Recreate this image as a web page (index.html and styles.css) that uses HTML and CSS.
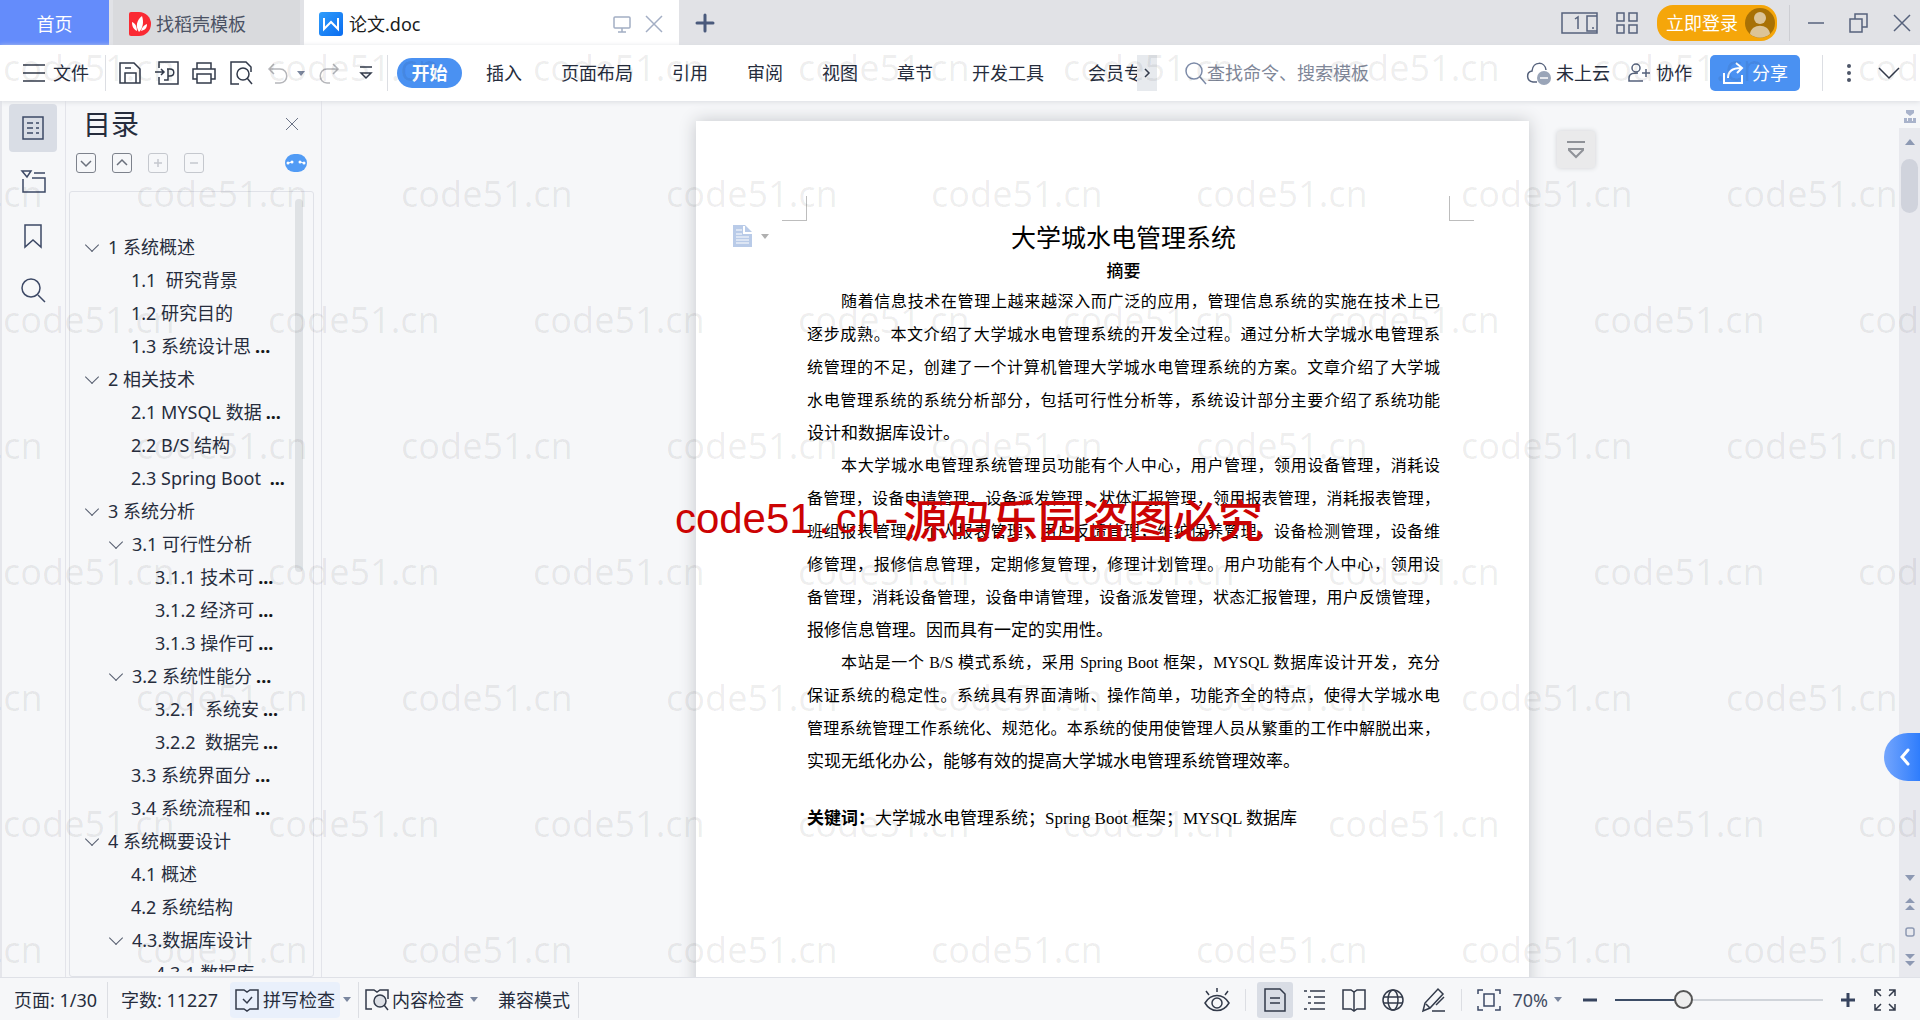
FILE: index.html
```html
<!DOCTYPE html>
<html lang="zh-CN">
<head>
<meta charset="utf-8">
<title>论文.doc</title>
<link rel="stylesheet" href="styles.css">
</head>
<body>
<header class="titlebar">
  <button class="tab tab-home">首页</button>
  <button class="tab tab-idle">
    <svg width="24" height="24" viewBox="0 0 24 24"><path d="M3 0h8a12 12 0 0 1 0 24H3a2 2 0 0 1-2-2V2a2 2 0 0 1 2-2z" fill="#fa2a33"/><path d="M11 20C7 14 9 8 14 4c2 6 1 12-3 16zM9 19c-4-2-5-5-5-9 3 1 5 4 5 9zM13 19c1-4 3-6 6-7 0 4-2 6-6 7z" fill="#fff"/></svg>
    <span>找稻壳模板</span>
  </button>
  <div class="tab tab-active">
    <svg width="24" height="24" viewBox="0 0 24 24"><defs><linearGradient id="wg" x1="0" y1="0" x2="1" y2="1"><stop offset="0" stop-color="#2f9dfb"/><stop offset="1" stop-color="#0a6cf0"/></linearGradient></defs><rect width="24" height="24" rx="3" fill="url(#wg)"/><path d="M5 6v11l7-7 7 7V6" fill="none" stroke="#fff" stroke-width="2"/></svg>
    <span class="tab-name">论文.doc</span>
    <svg class="line muted" width="20" height="20" viewBox="0 0 20 20"><rect x="2" y="3" width="16" height="11" rx="1"/><path d="M10 14v4M6 18h8"/></svg>
    <button class="plain" aria-label="关闭标签"><svg class="line muted" width="20" height="20" viewBox="0 0 20 20"><path d="M2 2l16 16M18 2L2 18"/></svg></button>
  </div>
  <button class="plain new-tab" aria-label="新建"><svg width="20" height="20" viewBox="0 0 20 20" fill="none" stroke="#4a5a7c" stroke-width="3" stroke-linecap="round"><path d="M10 2v16M2 10h16"/></svg></button>
  <div class="window-tools">
    <button class="plain" aria-label="窗口布局"><svg class="line slate" width="38" height="24" viewBox="0 0 38 24"><rect x="1" y="2" width="35" height="20"/><path d="M14 8l3-2v12M36 5H26v15h10M31 17h2"/></svg></button>
    <button class="plain" aria-label="应用"><svg class="line slate" width="24" height="24" viewBox="0 0 24 24"><path d="M2 2h7v8H2zM14 2h8v8h-8zM2 14h7v8H2zM14 14h8v8h-8z"/></svg></button>
    <button class="login"><span>立即登录</span><svg width="30" height="30" viewBox="0 0 30 30"><circle cx="15" cy="15" r="15" fill="#a87105"/><circle cx="15" cy="10" r="6" fill="#dcc497"/><path d="M5 26c1-11 19-11 20 0-6 5-14 5-20 0z" fill="#dcc497"/></svg></button>
    <i class="rule rule-dark"></i>
    <button class="plain win" aria-label="最小化"><svg class="line slate" width="20" height="20" viewBox="0 0 20 20"><path d="M2 10h16"/></svg></button>
    <button class="plain win" aria-label="还原"><svg class="line slate" width="20" height="20" viewBox="0 0 20 20"><path d="M1 6h12v13H1zM6 6V1h12v13h-5"/></svg></button>
    <button class="plain win" aria-label="关闭"><svg class="line slate" width="20" height="20" viewBox="0 0 20 20"><path d="M2 2l16 16M18 2L2 18"/></svg></button>
  </div>
</header>

<div class="toolbar">
  <button class="plain file-menu"><svg class="line dark" width="22" height="20" viewBox="0 0 22 20"><path d="M0 2h22M0 10h22M0 18h22"/></svg><span>文件</span></button>
  <i class="rule"></i>
  <div class="quick">
    <button class="plain" aria-label="保存"><svg class="line dark" width="24" height="24" viewBox="0 0 24 24"><path d="M2 2h14l6 6v14H2zM7 22V12h11v10M7 7h6"/></svg></button>
    <button class="plain" aria-label="输出为PDF"><svg class="line dark" width="24" height="24" viewBox="0 0 24 24"><path d="M4 7V1h19v22H4v-7M0 11h9M6 8l3 3-3 3M12 8h3c5 0 5 7 0 7h-2M13 8v11H9"/></svg></button>
    <button class="plain" aria-label="打印"><svg class="line dark" width="24" height="24" viewBox="0 0 24 24"><path d="M5 8V2h14v6M5 18H1V8h22v10h-4M5 13h14v9H5z"/></svg></button>
    <button class="plain" aria-label="打印预览"><svg class="line dark" width="24" height="24" viewBox="0 0 24 24"><path d="M10 23H2V1h15l5 5v5"/><circle cx="14" cy="13" r="6"/><path d="M18 17l5 6"/></svg></button>
    <button class="plain" aria-label="撤销"><svg class="line faint" width="24" height="24" viewBox="0 0 24 24"><path d="M8 3L3 8l5 5M3 8h11c9 0 9 14 0 14H9"/></svg></button>
    <i class="caret"></i>
    <button class="plain" aria-label="恢复"><svg class="line faint" width="24" height="24" viewBox="0 0 24 24"><path d="M16 3l5 5-5 5M21 8H10c-9 0-9 14 0 14h3"/></svg></button>
    <button class="plain more" aria-label="自定义快速访问"><svg class="line dark" width="14" height="16" viewBox="0 0 14 16"><path d="M1 2h12M2 8l5 5 5-5z"/></svg></button>
  </div>
  <i class="rule"></i>
  <nav class="menu">
    <button class="menu-on">开始</button>
    <button>插入</button><button>页面布局</button><button>引用</button><button>审阅</button><button>视图</button><button>章节</button><button>开发工具</button><button class="menu-cut">会员专享</button>
  </nav>
  <button class="menu-next" aria-label="更多选项卡"><svg class="line dark" width="8" height="12" viewBox="0 0 8 12"><path d="M2 2l4 4-4 4"/></svg></button>
  <label class="search"><svg class="line" width="24" height="24" viewBox="0 0 24 24"><circle cx="11" cy="10" r="8"/><path d="M17 16l6 7"/></svg><input type="text" placeholder="查找命令、搜索模板" aria-label="查找命令"></label>
  <div class="toolbar-end">
    <button class="plain cloud"><svg class="line slate" width="26" height="26" viewBox="0 0 26 26"><path d="M11 22H7c-7-1-7-10-1-11C7 1 19 1 20 10"/><circle cx="18" cy="18" r="7" fill="#9aa5b8" stroke="none"/><path d="M14 18h8" stroke="#fff"/></svg><span>未上云</span></button>
    <button class="plain"><svg class="line slate" width="24" height="24" viewBox="0 0 24 24"><circle cx="10" cy="7" r="4"/><path d="M17 20H3v-3c0-5 5-5 9-5M16 12h8M20 8v8"/></svg><span>协作</span></button>
    <button class="share"><svg width="24" height="24" viewBox="0 0 24 24" fill="none" stroke="#fff" stroke-width="2"><path d="M2 12v10h18v-8M6 17c0-7 5-10 13-10M14 2l6 5-5 5"/></svg><span>分享</span></button>
    <i class="rule"></i>
    <button class="plain" aria-label="更多"><svg width="8" height="22" viewBox="0 0 8 22" fill="#4d5668"><circle cx="4" cy="4" r="2"/><circle cx="4" cy="11" r="2"/><circle cx="4" cy="18" r="2"/></svg></button>
    <button class="plain fold" aria-label="收起功能区"><svg class="line dark" width="22" height="16" viewBox="0 0 22 16"><path d="M1 3l10 10L21 3"/></svg></button>
  </div>
</div>

<div class="workspace">
  <aside class="rail">
    <button class="rail-on" aria-label="目录"><svg class="line navy" width="24" height="26" viewBox="0 0 24 26"><path d="M2 2h20v22H2zM6 8h6M6 13h6M6 18h6M15 8h3M15 13h3M15 18h3"/></svg></button>
    <button aria-label="章节"><svg class="line navy" width="26" height="26" viewBox="0 0 26 26"><path d="M2 2h9l-4 6zM14 4h11M12 9h13v14H3V10"/></svg></button>
    <button aria-label="书签"><svg class="line navy" width="20" height="26" viewBox="0 0 20 26"><path d="M2 2h16v22l-8-7-8 7z"/></svg></button>
    <button aria-label="查找"><svg class="line navy" width="26" height="26" viewBox="0 0 26 26"><circle cx="11" cy="11" r="9"/><path d="M18 18l7 7"/></svg></button>
  </aside>
  <section class="outline">
    <div class="outline-head"><h2>目录</h2><button class="plain" aria-label="关闭目录"><svg class="hair" width="14" height="14" viewBox="0 0 14 14"><path d="M1 1l12 12M13 1L1 13"/></svg></button></div>
    <div class="outline-tools">
      <button class="box" aria-label="展开"><svg width="12" height="12" viewBox="0 0 12 12"><path d="M1 4l5 5 5-5"/></svg></button>
      <button class="box" aria-label="收缩"><svg width="12" height="12" viewBox="0 0 12 12"><path d="M1 8l5-5 5 5"/></svg></button>
      <button class="box box-off" aria-label="提升"><svg width="12" height="12" viewBox="0 0 12 12"><path d="M6 2v8M2 6h8"/></svg></button>
      <button class="box box-off" aria-label="降低"><svg width="12" height="12" viewBox="0 0 12 12"><path d="M2 6h8"/></svg></button>
      <button class="plain robot" aria-label="智能识别目录"><svg width="22" height="18" viewBox="0 0 22 18"><rect width="22" height="18" rx="9" fill="#519bf5"/><path d="M3 9l4-1M15 8l4 1" stroke="#fff"/><circle cx="3" cy="9" r="1.500" fill="#fff"/><circle cx="7" cy="8" r="1.500" fill="#fff"/><circle cx="15" cy="8" r="1.500" fill="#fff"/><circle cx="19" cy="9" r="1.500" fill="#fff"/></svg></button>
    </div>
    <div class="tree">
      <ul>
        <li class="l1 open">1 系统概述</li>
        <li class="l2">1.1&nbsp; 研究背景</li>
        <li class="l2">1.2 研究目的</li>
        <li class="l2">1.3 系统设计思<b>...</b></li>
        <li class="l1 open">2 相关技术</li>
        <li class="l2">2.1 MYSQL 数据<b>...</b></li>
        <li class="l2">2.2 B/S 结构</li>
        <li class="l2">2.3 Spring Boot <b>...</b></li>
        <li class="l1 open">3 系统分析</li>
        <li class="l2 open">3.1 可行性分析</li>
        <li class="l3">3.1.1 技术可<b>...</b></li>
        <li class="l3">3.1.2 经济可<b>...</b></li>
        <li class="l3">3.1.3 操作可<b>...</b></li>
        <li class="l2 open">3.2 系统性能分<b>...</b></li>
        <li class="l3">3.2.1&nbsp; 系统安<b>...</b></li>
        <li class="l3">3.2.2&nbsp; 数据完<b>...</b></li>
        <li class="l2">3.3 系统界面分<b>...</b></li>
        <li class="l2">3.4 系统流程和<b>...</b></li>
        <li class="l1 open">4 系统概要设计</li>
        <li class="l2">4.1 概述</li>
        <li class="l2">4.2 系统结构</li>
        <li class="l2 open">4.3.数据库设计</li>
        <li class="l3">4.3.1 数据库</li>
      </ul>
      <i class="tree-thumb"></i>
    </div>
  </section>

  <main class="canvas">
    <article class="page">
      <i class="crop crop-left"></i><i class="crop crop-right"></i>
      <button class="plain para-tool" aria-label="段落布局"><svg width="19" height="22" viewBox="0 0 19 22"><path d="M0 0h12l7 7v15H0z" fill="#b9cbe8"/><path d="M3 5h6M3 9h6M3 12h13M3 15h13M3 18h13" stroke="#fff" stroke-width="1"/><path d="M11 1v7h8" fill="none" stroke="#fff" stroke-width="2"/></svg><i class="caret"></i></button>
      <h1>大学城水电管理系统</h1>
      <h3>摘要</h3>
      <p>
        <span class="first">随着信息技术在管理上越来越深入而广泛的应用，管理信息系统的实施在技术上已</span>
        <span>逐步成熟。本文介绍了大学城水电管理系统的开发全过程。通过分析大学城水电管理系</span>
        <span>统管理的不足，创建了一个计算机管理大学城水电管理系统的方案。文章介绍了大学城</span>
        <span>水电管理系统的系统分析部分，包括可行性分析等，系统设计部分主要介绍了系统功能</span>
        <span class="last">设计和数据库设计。</span>
      </p>
      <p>
        <span class="first">本大学城水电管理系统管理员功能有个人中心，用户管理，领用设备管理，消耗设</span>
        <span>备管理，设备申请管理，设备派发管理，状体汇报管理，领用报表管理，消耗报表管理，</span>
        <span>班组报表管理，个人报表管理，用户反馈管理，维护保养管理，设备检测管理，设备维</span>
        <span>修管理，报修信息管理，定期修复管理，修理计划管理。用户功能有个人中心，领用设</span>
        <span>备管理，消耗设备管理，设备申请管理，设备派发管理，状态汇报管理，用户反馈管理，</span>
        <span class="last">报修信息管理。因而具有一定的实用性。</span>
      </p>
      <p>
        <span class="first">本站是一个 B/S 模式系统，采用 Spring Boot 框架，MYSQL 数据库设计开发，充分</span>
        <span>保证系统的稳定性。系统具有界面清晰、操作简单，功能齐全的特点，使得大学城水电</span>
        <span>管理系统管理工作系统化、规范化。本系统的使用使管理人员从繁重的工作中解脱出来，</span>
        <span class="last">实现无纸化办公，能够有效的提高大学城水电管理系统管理效率。</span>
      </p>
      <p class="keywords"><span class="last"><b>关键词：</b>大学城水电管理系统；Spring Boot 框架；MYSQL 数据库</span></p>
      <button class="page-float" aria-label="页面工具"><svg width="20" height="20" viewBox="0 0 20 20" fill="none" stroke="#8f9298" stroke-width="2"><path d="M1 2h18M3 10v-1h14v1l-7 7z"/></svg></button>
    </article>
  </main>

  <div class="scroller">
    <svg class="ruler" width="14" height="14" viewBox="0 0 14 14" fill="#a9b3cb"><path d="M3 0h8v3L7 6 3 3zM1 8h3v3h1V8h4v3h1V8h3v5H1z"/></svg>
    <div class="track">
      <svg width="10" height="6" viewBox="0 0 10 6"><path d="M0 6l5-6 5 6z"/></svg>
      <i class="thumb"></i>
      <button class="plain side-tab" aria-label="展开侧栏"><svg width="10" height="20" viewBox="0 0 10 20" fill="none" stroke="#fff" stroke-width="3" stroke-linecap="round"><path d="M8 3l-6 7 6 7"/></svg></button>
      <div class="track-end">
        <svg width="10" height="6" viewBox="0 0 10 6"><path d="M0 0l5 6 5-6z"/></svg>
        <svg width="10" height="12" viewBox="0 0 10 12"><path d="M0 5l5-5 5 5zM0 12l5-5 5 5z"/></svg>
        <svg width="10" height="10" viewBox="0 0 10 10"><rect x="1" y="1" width="8" height="8" rx="2" fill="none" stroke="#8d99b3" stroke-width="1.500"/></svg>
        <svg width="10" height="12" viewBox="0 0 10 12"><path d="M0 0l5 5 5-5zM0 7l5 5 5-5z"/></svg>
      </div>
    </div>
  </div>
</div>

<footer class="status">
  <span class="s-page">页面: 1/30</span><i class="rule"></i><span class="s-words">字数: 11227</span>
  <button class="spell"><svg class="line dark" width="24" height="24" viewBox="0 0 24 24"><path d="M1 2h8l3 2 3-2h8v19h-8l-3 2-3-2H1zM8 11l4 4 5-6"/></svg><span>拼写检查</span></button><i class="caret"></i><i class="rule"></i>
  <button class="plain check"><svg class="line dark" width="24" height="24" viewBox="0 0 24 24"><path d="M7 21H1V2h8l3 2 3-2h8v9"/><circle cx="15" cy="13" r="6" fill="#dde0e6"/><path d="M19 17l4 5"/></svg><span>内容检查</span></button><i class="caret"></i>
  <span class="s-mode">兼容模式</span><i class="rule"></i>
  <div class="views">
    <button class="plain" aria-label="护眼模式"><svg class="line dark" width="26" height="26" viewBox="0 0 26 26"><path d="M1 16c6-10 18-10 24 0-6 10-18 10-24 0zM13 1v4M2 4l3 4M24 4l-3 4"/><circle cx="13" cy="16" r="5"/></svg></button>
    <i class="rule"></i>
    <button class="view-on" aria-label="页面视图"><svg class="line dark" width="24" height="24" viewBox="0 0 24 24"><path d="M2 1h15l5 5v17H2zM7 10h10M7 15h10"/></svg></button>
    <button class="plain" aria-label="大纲"><svg class="line dark" width="24" height="24" viewBox="0 0 24 24"><path d="M1 3h3M7 3h15M5 9h3M11 9h11M5 15h3M11 15h11M1 21h3M7 21h15"/></svg></button>
    <button class="plain" aria-label="阅读版式"><svg class="line dark" width="24" height="24" viewBox="0 0 24 24"><path d="M1 2h8l3 2 3-2h8v19h-8l-3 2-3-2H1zM12 4v19"/></svg></button>
    <button class="plain" aria-label="Web版式"><svg class="line dark" width="24" height="24" viewBox="0 0 24 24"><circle cx="12" cy="12" r="10"/><ellipse cx="12" cy="12" rx="5" ry="10"/><path d="M2 9h20M2 15h20"/></svg></button>
    <button class="plain" aria-label="写作模式"><svg class="line dark" width="26" height="26" viewBox="0 0 26 26"><path d="M3 24l2-8L18 2l5 5-13 14-7 3zM6 17l4 4M24 10l-8 8M12 24h13"/></svg></button>
    <i class="rule"></i>
    <button class="plain" aria-label="缩放至页面"><svg class="line navy" width="24" height="24" viewBox="0 0 24 24"><path d="M1 6V2h5M18 2h5v4M23 18v4h-5M6 22H1v-4M7 6h10v12H7z"/></svg></button>
    <button class="plain zoom-value">70%<i class="caret"></i></button>
    <button class="plain" aria-label="缩小"><svg class="step" width="16" height="16" viewBox="0 0 16 16"><path d="M1 8h14"/></svg></button>
    <input class="zoom" type="range" min="0" max="100" value="31" aria-label="缩放">
    <button class="plain zoom-in" aria-label="放大"><svg class="step" width="16" height="16" viewBox="0 0 16 16"><path d="M1 8h14M8 1v14"/></svg></button>
    <button class="plain" aria-label="全屏"><svg class="line dark" width="24" height="24" viewBox="0 0 24 24"><path d="M2 8V2h6M2 2l6 6M16 2h6v6M22 2l-6 6M22 16v6h-6M22 22l-6-6M8 22H2v-6M2 22l6-6"/></svg></button>
  </div>
</footer>

<div class="marks" aria-hidden="true">
  <div><span>code51.cn</span><span>code51.cn</span><span>code51.cn</span><span>code51.cn</span><span>code51.cn</span><span>code51.cn</span><span>code51.cn</span><span>code51.cn</span></div>
  <div><span>code51.cn</span><span>code51.cn</span><span>code51.cn</span><span>code51.cn</span><span>code51.cn</span><span>code51.cn</span><span>code51.cn</span><span>code51.cn</span></div>
  <div><span>code51.cn</span><span>code51.cn</span><span>code51.cn</span><span>code51.cn</span><span>code51.cn</span><span>code51.cn</span><span>code51.cn</span><span>code51.cn</span></div>
  <div><span>code51.cn</span><span>code51.cn</span><span>code51.cn</span><span>code51.cn</span><span>code51.cn</span><span>code51.cn</span><span>code51.cn</span><span>code51.cn</span></div>
  <div><span>code51.cn</span><span>code51.cn</span><span>code51.cn</span><span>code51.cn</span><span>code51.cn</span><span>code51.cn</span><span>code51.cn</span><span>code51.cn</span></div>
  <div><span>code51.cn</span><span>code51.cn</span><span>code51.cn</span><span>code51.cn</span><span>code51.cn</span><span>code51.cn</span><span>code51.cn</span><span>code51.cn</span></div>
  <div><span>code51.cn</span><span>code51.cn</span><span>code51.cn</span><span>code51.cn</span><span>code51.cn</span><span>code51.cn</span><span>code51.cn</span><span>code51.cn</span></div>
  <div><span>code51.cn</span><span>code51.cn</span><span>code51.cn</span><span>code51.cn</span><span>code51.cn</span><span>code51.cn</span><span>code51.cn</span><span>code51.cn</span></div>
</div>
<div class="notice"><span class="latin">code51<span class="cell">.</span>cn<span class="cell">-</span></span><span>源码乐园盗图必究</span></div>
</body>
</html>
```
FILE: styles.css
```css
* { box-sizing: border-box; }

body {
  margin: 0;
  height: 100vh;
  display: flex;
  flex-direction: column;
  overflow: hidden;
  position: relative;
  background: #f6f7f9;
  color: #262d3d;
  font: 18px/24px "Noto Sans", "Noto Sans CJK SC", sans-serif;
}

button, input { font: inherit; color: inherit; }
button { border: 0; padding: 0; background: none; white-space: nowrap; }
svg { display: block; flex: none; }
i { font-style: normal; flex: none; }

.plain, .login, .share, .spell { display: flex; align-items: center; flex: none; }

.line { fill: none; stroke: #7d8ba8; stroke-width: 1.5; }
.line.muted { stroke: #a3aec4; }
.line.slate { stroke: #56627c; }
.line.dark { stroke: #323a4a; }
.line.navy { stroke: #3d4966; }
.line.faint { stroke: #b5b6ba; }
.hair { fill: none; stroke: #6b7387; stroke-width: 1; }
.step { fill: none; stroke: #37445f; stroke-width: 3; }

.rule { width: 1px; height: 36px; background: #dcdee3; }
.caret {
  width: 8px;
  border: 4px solid transparent;
  border-top: 5px solid #7b879f;
  border-bottom: 0;
}

/* Title bar */
.titlebar { flex: none; height: 45px; display: flex; align-items: center; gap: 4px; background: #e1e2e6; }
.tab { height: 45px; display: flex; align-items: center; flex: none; padding-top: 2px; }
.tab-home { width: 109px; justify-content: center; background: #648cfb; color: #fff; }
.tab-idle { width: 187px; padding-left: 15px; gap: 4px; background: #d9dadd; color: #4b5264; }
.tab-active { width: 375px; padding: 2px 15px 0; gap: 6px; background: #fff; color: #1a1c20; }
.tab-name { flex: 1; }
.tab-active .plain { margin-left: 6px; }
.new-tab { margin-left: 12px; }
.window-tools { margin-left: auto; display: flex; align-items: center; padding-right: 8px; }
.login { width: 120px; height: 36px; margin: 0 12px 0 18px; padding: 0 2px 0 9px; justify-content: space-between; border-radius: 16px; background: #f5a60a; color: #fff; }
.window-tools .plain + .plain { margin-left: 16px; }
.window-tools .rule + .win { margin-left: 16px; }
.window-tools .win + .win { margin-left: 23px; }
.rule-dark { background: #cdced3; }

/* Toolbar */
.toolbar { flex: none; height: 56px; display: flex; align-items: center; padding: 0 20px 0 23px; background: #fff; box-shadow: 0 1px 5px #d9dbe0; position: relative; }
.file-menu { gap: 8px; margin-right: 16px; }
.quick { display: flex; align-items: center; gap: 13px; padding: 0 14px 0 12px; }
.quick .caret { margin-left: -6px; margin-right: -1px; }
.quick .more { margin-left: 5px; }
.menu { flex: 0 1 740px; margin-left: 9px; display: flex; align-items: center; gap: 39px; overflow: hidden; }
.menu button { flex: none; height: 30px; }
.menu .menu-on { width: 65px; margin-right: -15px; border-radius: 15px; background: #4a91f2; color: #fff; font-weight: 700; }
.menu .menu-cut { margin-left: 5px; }
.menu-next { flex: none; width: 20px; height: 36px; display: grid; place-items: center; background: #e7eaee; }
.search { display: flex; align-items: center; margin-left: 26px; }
.search input { width: 180px; border: 0; padding: 0; background: none; outline: 0; }
.search input::placeholder { color: #7f8798; opacity: 1; }
.toolbar-end { margin-left: auto; display: flex; align-items: center; }
.toolbar-end .plain { gap: 6px; }
.toolbar-end .cloud { margin-right: 16px; gap: 4px; }
.share { width: 90px; height: 36px; margin: 0 22px 0 18px; justify-content: center; gap: 6px; border-radius: 5px; background: #4a91f2; color: #fff; }
.toolbar-end .rule + .plain { margin-left: 22px; }
.toolbar-end .fold { margin-left: 25px; }

/* Workspace */
.workspace { flex: 1; min-height: 0; display: flex; border-bottom: 1px solid #dfe1e7; }

.rail { width: 66px; flex: none; padding: 3px 8px 0 7px; display: flex; flex-direction: column; gap: 6px; border-left: 2px solid #e5e6eb; border-right: 1px solid #e3e4ea; }
.rail button { width: 48px; height: 48px; display: grid; place-items: center; border-radius: 4px; }
.rail .rail-on { background: #d9dde5; }

.outline { width: 256px; flex: none; display: flex; flex-direction: column; padding: 0 7px 0 3px; border-right: 1px solid #e3e4ea; }
.outline-head { display: flex; align-items: center; justify-content: space-between; padding: 4px 15px 0 14px; }
.outline-head h2 { margin: 0; font-size: 28px; line-height: 38px; font-weight: 400; }
.outline-tools { display: flex; align-items: center; gap: 16px; padding: 10px 7px 0 7px; }
.box { width: 20px; height: 20px; display: grid; place-items: center; border: 1px solid #7d828c; border-radius: 3px; }
.box svg { fill: none; stroke: #6a707c; stroke-width: 1.5; }
.box-off { border-color: #c5c8ce; }
.box-off svg { stroke: #c5c8ce; }
.robot { margin-left: auto; }

.tree { flex: 1; min-height: 0; margin-top: 18px; overflow: hidden; position: relative; border: 1px solid #e0e2e8; border-radius: 3px; }
.tree ul { margin: 0; height: 100%; overflow: hidden; list-style: none; padding: 38px 0 0; border-bottom: 4px solid transparent; }
.tree li { display: flex; align-items: center; height: 33px; white-space: pre; }
.tree b { margin-left: 4px; color: #15171c; }
.l1 { padding-left: 37px; }
.l2 { padding-left: 61px; }
.l3 { padding-left: 85px; }
.open::before { content: ""; width: 9px; height: 9px; flex: none; margin: -4px 11px 0 -20px; border: solid #555d6e; border-width: 0 1px 1px 0; transform: rotate(45deg); }
.tree-thumb { position: absolute; top: 7px; right: 10px; width: 8px; height: 373px; border-radius: 4px; background: #dfe2e5; }

/* Document */
.canvas { flex: 1; min-width: 0; padding: 20px 0 0 4px; overflow: hidden; }
.page { position: relative; width: 833px; min-height: 1178px; margin: 0 auto; padding: 98px 89px 0 111px; background: #fff; color: #000; box-shadow: 0 0 16px #c4c6ca; font: 17px/33px "Liberation Serif", "Noto Sans CJK SC", serif; }
.page h1 { margin: 0; font-size: 25px; line-height: 40px; font-weight: 400; text-align: center; }
.page h3 { margin: 0; font-size: 17px; line-height: 26px; font-weight: 500; text-align: center; }
.page p { margin: 0 0 -1px; font-size: 16px; }
.page p span { display: block; white-space: nowrap; text-align: justify; text-align-last: justify; }
.page p .first { padding-left: 34px; }
.page p .last { font-size: 17px; text-align-last: left; }
.page .keywords { margin-top: 25px; }
.crop { position: absolute; top: 75px; width: 25px; height: 25px; border-bottom: 1px solid #bdbdbd; }
.crop-left { left: 86px; border-right: 1px solid #bdbdbd; }
.crop-right { right: 55px; border-left: 1px solid #bdbdbd; }
.para-tool { position: absolute; left: 37px; top: 104px; gap: 9px; }
.para-tool .caret { border-top-color: #b0b0b0; }
.page-float { position: absolute; left: calc(100% + 28px); top: 10px; width: 38px; height: 37px; display: grid; place-items: center; border-radius: 3px; background: #eaeaeb; box-shadow: 0 0 5px #cfd1d5; }

.scroller { width: 21px; flex: none; display: flex; flex-direction: column; align-items: center; }
.ruler { margin: 9px 0 4px; }
.track { flex: 1; align-self: stretch; position: relative; display: flex; flex-direction: column; align-items: center; padding: 11px 0; background: #e8e9ee; fill: #8d99b3; }
.thumb { width: 17px; height: 54px; margin-top: 14px; border-radius: 9px; background: #d0d3dc; }
.side-tab { position: absolute; right: 0; bottom: 196px; width: 36px; height: 48px; justify-content: flex-end; padding-right: 10px; border-radius: 24px 0 0 24px; background: linear-gradient(90deg, #73a5fd, #2f7dfc); }
.track-end { margin-top: auto; display: flex; flex-direction: column; align-items: center; gap: 17px; }

/* Status bar */
.status { flex: none; height: 42px; display: flex; align-items: center; padding: 1px 23px 0 14px; white-space: nowrap; }
.s-page { flex: none; width: 93px; }
.s-words { flex: none; width: 122px; padding-left: 13px; }
.spell { width: 110px; height: 36px; margin-right: 3px; gap: 4px; justify-content: center; border-radius: 4px; background: #e9f0fb; }
.spell + .caret { margin-right: 7px; }
.status .check { margin: 0 6px; gap: 3px; }
.s-mode { margin: 0 8px 0 20px; }
.views { margin-left: auto; display: flex; align-items: center; gap: 15px; }
.views .rule { height: 22px; }
.views .rule + .view-on { margin-left: -4px; }
.view-on { width: 36px; height: 36px; margin-right: -5px; display: grid; place-items: center; border-radius: 3px; background: #d9dde5; }
.zoom-value { gap: 6px; margin-left: -4px; margin-right: 5px; color: #434c63; }
.zoom { appearance: none; width: 208px; height: 20px; margin: 0 2px; background: linear-gradient(90deg, #3c4c66 60px, #d0d4da 60px) center / 100% 2px no-repeat; }
.zoom::-webkit-slider-thumb { appearance: none; width: 19px; height: 19px; border: 2px solid #555; border-radius: 50%; background: #ededed; }
.zoom-in { margin-right: 2px; }

/* Repeated overlay text */
.marks { position: absolute; inset: 0; overflow: hidden; pointer-events: none; padding-top: 44px; color: rgba(0, 0, 0, 0.065); font: 36px/48px "Noto Sans", sans-serif; }
.marks div { height: 126px; width: max-content; display: flex; padding-left: 3px; }
.marks div:nth-child(even) { margin-left: -132px; }
.marks span { width: 265px; flex: none; }

.notice { position: absolute; inset: 0; display: flex; align-items: center; justify-content: center; padding: 18px 0 0 18px; pointer-events: none; color: #cc0303; font: 500 45px/48px "Noto Sans CJK SC", sans-serif; }
.latin { font: 42px/48px "Liberation Sans", sans-serif; }
.cell { display: inline-block; width: 23px; text-align: center; }
```
